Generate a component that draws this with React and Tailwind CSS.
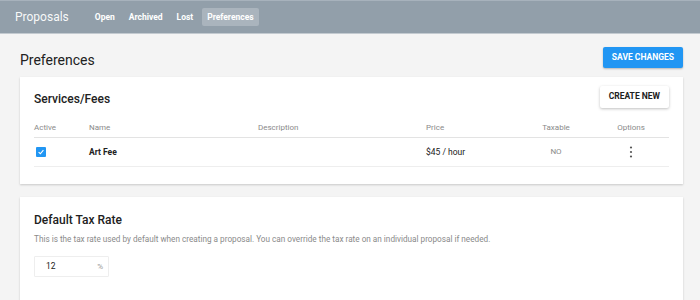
const FONT = { fontFamily: 'Roboto, "Liberation Sans", sans-serif' }

const NAV = ['Open', 'Archived', 'Lost', 'Preferences']

function Checkbox() {
  return (
    <span className="w-[10px] h-[10px] rounded-[1px] bg-[#2196f3] flex items-center justify-center">
      <svg width="8" height="8" viewBox="0 0 10 10">
        <path d="M2 5.2 L4.2 7.2 L8 2.8" fill="none" stroke="white" strokeWidth="1.4" />
      </svg>
    </span>
  )
}

export default function App() {
  return (
    <div className="w-[700px] h-[300px] overflow-hidden bg-[#f4f4f4] text-[#212121]" style={FONT}>
      {/* top bar */}
      <header className="h-[34px] bg-[#929faa] border-t border-t-[#a7b2bc] border-b border-b-[#c3cad0] flex items-center pl-[15px]">
        <span className="text-[12px] text-white/95 leading-none mr-[21px]">Proposals</span>
        <nav className="flex items-center gap-[4px]">
          {NAV.map(n => (
            <span
              key={n}
              className={
                'px-[5px] h-[18px] flex items-center text-[8.5px] font-bold text-white rounded-[2px] ' +
                (n === 'Preferences' ? 'bg-[#aab4bd]' : '')
              }
            >
              {n}
            </span>
          ))}
        </nav>
      </header>

      <main className="pl-[20px] pr-[17px]">
        <div className="flex items-center justify-between pt-[13px] pb-[9px]">
          <h1 className="text-[14px] leading-none mt-[5px]">Preferences</h1>
          <button className="h-[21px] px-[9px] bg-[#2196f3] text-white text-[8.5px] font-bold rounded-[2px] shadow-[0_1px_2px_rgba(0,0,0,0.25)]">
            SAVE CHANGES
          </button>
        </div>

        {/* services card */}
        <section className="bg-white shadow-[0_1px_2px_rgba(0,0,0,0.18)] px-[14px] pt-[8px] pb-[17px]">
          <div className="flex items-center justify-between">
            <h2 className="text-[12px] font-medium mt-[5px]">Services/Fees</h2>
            <button className="h-[22px] px-[9px] bg-white text-[8.5px] font-bold text-[#212121] rounded-[2px] shadow-[0_1px_3px_rgba(0,0,0,0.25)]">
              CREATE NEW
            </button>
          </div>
          <div className="mt-[10px] text-[8px]">
            <div className="grid grid-cols-[55px_169px_168px_93px_74px_76px] h-[20px] items-center text-[#8a8a8a] border-b border-[#e3e3e3]">
              <span>Active</span>
              <span>Name</span>
              <span>Description</span>
              <span>Price</span>
              <span className="text-center">Taxable</span>
              <span className="text-center">Options</span>
            </div>
            <div className="grid grid-cols-[55px_169px_168px_93px_74px_76px] h-[29px] items-center border-b border-[#eeeeee]">
              <span className="pl-[2px]"><Checkbox /></span>
              <span className="font-bold text-[8.5px]">Art Fee</span>
              <span></span>
              <span className="text-[8.5px]">$45 / hour</span>
              <span className="text-center text-[#8a8a8a]">NO</span>
              <span className="flex justify-center">
                <svg width="4" height="12" viewBox="0 0 4 12">
                  <circle cx="2" cy="1.5" r="1.1" fill="#555" />
                  <circle cx="2" cy="6" r="1.1" fill="#555" />
                  <circle cx="2" cy="10.5" r="1.1" fill="#555" />
                </svg>
              </span>
            </div>
          </div>
        </section>

        {/* tax card */}
        <section className="mt-[13px] bg-white shadow-[0_1px_2px_rgba(0,0,0,0.18)] px-[14px] pt-[17px] h-[120px]">
          <h2 className="text-[12px] font-medium leading-none">Default Tax Rate</h2>
          <p className="mt-[7px] text-[8.2px] text-[#8a8a8a]">
            This is the tax rate used by default when creating a proposal. You can override the tax rate on an individual proposal if needed.
          </p>
          <div className="mt-[11px] w-[75px] h-[21px] border border-[#eeeeee] rounded-[1px] flex items-center justify-between pl-[11px] pr-[5px]">
            <span className="text-[8.5px]">12</span>
            <span className="text-[8px] text-[#999]">%</span>
          </div>
        </section>
      </main>
    </div>
  )
}
